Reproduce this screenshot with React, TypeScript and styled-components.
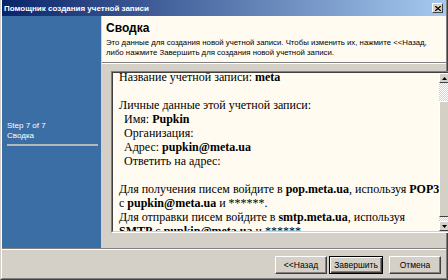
import React from "react";
import styled, { createGlobalStyle } from "styled-components";

const Global = createGlobalStyle`
  html, body { margin: 0; padding: 0; background: #d4d0c8; }
  body { width: 448px; height: 280px; overflow: hidden; }
`;

const ui = `"Liberation Sans", Arial, sans-serif`;
const serif = `"Liberation Serif", "Times New Roman", serif`;

const Window = styled.div`
  width: 448px;
  height: 280px;
  box-sizing: border-box;
  display: flex;
  flex-direction: column;
  background: #d4d0c8;
  border-left: 1px solid #d4d0c8;
  border-right: 1px solid #404040;
  border-bottom: 1px solid #404040;
`;

const Frame = styled.div`
  flex: 1;
  display: flex;
  flex-direction: column;
  border-left: 1px solid #ffffff;
  border-right: 1px solid #808080;
  border-bottom: 1px solid #808080;
  min-height: 0;
`;

const TitleBar = styled.div`
  height: 16px;
  flex: none;
  display: flex;
  align-items: center;
  justify-content: space-between;
  padding: 0 3px 0 2px;
  background: linear-gradient(to right, #0a246a, #a6caf0);
  font: bold 8px ${ui};
  color: #fff;
  white-space: nowrap;
`;

const CloseBtn = styled.div`
  width: 11px;
  height: 10px;
  box-sizing: border-box;
  background: #d4d0c8;
  border: 1px solid;
  border-color: #fff #404040 #404040 #fff;
  display: flex;
  align-items: center;
  justify-content: center;
`;

const Body = styled.div`
  height: 232px;
  flex: none;
  display: flex;
`;

const Sidebar = styled.div`
  width: 100px;
  flex: none;
  background: #3a6ea5;
  border-right: 1px solid #d4d0c8;
  display: flex;
  flex-direction: column;
  justify-content: flex-end;
  padding: 0 3px 102px 5px;
  box-sizing: border-box;
  color: #fff;
  font: 8px ${ui};
`;

const StepLine = styled.div`
  line-height: 10px;
`;

const StepRule = styled.div`
  height: 2px;
  margin-top: 3px;
  background: #b4b8bc;
`;

const Main = styled.div`
  flex: 1;
  display: flex;
  flex-direction: column;
  min-width: 0;
`;

const Header = styled.div`
  height: 47px;
  flex: none;
  box-sizing: border-box;
  background: #fffbf0;
  border-bottom: 1px solid #808080;
  padding: 5px 6px 0 4px;
`;

const HeaderTitle = styled.div`
  font: bold 12px ${ui};
  color: #000;
  line-height: 14px;
`;

const HeaderText = styled.div`
  margin-top: 3px;
  font: 7.8px ${ui};
  line-height: 9.5px;
  color: #000;
  white-space: nowrap;
`;

const Pane = styled.div`
  flex: 1;
  border-top: 1px solid #fff;
  padding: 7px 8px 15px 9px;
  display: flex;
  min-height: 0;
`;

const Sunken = styled.div`
  flex: 1;
  display: flex;
  border: 1px solid;
  border-color: #808080 #fff #fff #808080;
`;

const SunkenInner = styled.div`
  flex: 1;
  display: flex;
  border: 1px solid;
  border-color: #404040 #d4d0c8 #d4d0c8 #404040;
  background: #fffbf0;
  min-height: 0;
`;

const TextArea = styled.div`
  flex: 1;
  overflow: hidden;
  padding-left: 6px;
  font: 12px ${serif};
  color: #000;
`;

const TextInner = styled.div`
  margin-top: -3px;
`;

const Line = styled.div<{ $indent?: boolean }>`
  line-height: 14px;
  height: 14px;
  white-space: nowrap;
  padding-left: ${(p) => (p.$indent ? "5px" : "0")};
`;

const ScrollBar = styled.div`
  width: 10px;
  flex: none;
  display: flex;
  flex-direction: column;
`;

const ScrollBtn = styled.div`
  height: 10px;
  flex: none;
  box-sizing: border-box;
  background: #d4d0c8;
  border: 1px solid;
  border-color: #fff #404040 #404040 #fff;
  display: flex;
  align-items: center;
  justify-content: center;
`;

const Track = styled.div<{ $h: number }>`
  height: ${(p) => p.$h}px;
  flex: none;
  background: repeating-conic-gradient(#d4d0c8 0 25%, #ffffff 0 50%) 0 0 / 2px 2px;
`;

const Thumb = styled.div`
  flex: 1;
  box-sizing: border-box;
  background: #d4d0c8;
  border: 1px solid;
  border-color: #fff #404040 #404040 #fff;
`;

const Footer = styled.div`
  flex: 1;
  border-top: 1px solid #808080;
  box-shadow: inset 0 1px #fff;
  display: flex;
  align-items: center;
  justify-content: flex-end;
  padding: 2px 5px 0 0;
`;

const Button = styled.button<{ $default?: boolean; $gap?: number }>`
  width: ${(p) => (p.$default ? 54 : 52)}px;
  height: 18px;
  margin-left: ${(p) => p.$gap ?? 0}px;
  padding: 0;
  box-sizing: border-box;
  background: #d4d0c8;
  font: 8.5px ${ui};
  color: #000;
  border: 1px solid;
  border-color: ${(p) => (p.$default ? "#000" : "#fff #404040 #404040 #fff")};
  box-shadow: ${(p) =>
    p.$default
      ? "inset 1px 1px #fff, inset -1px -1px #404040, inset -2px -2px #808080"
      : "inset -1px -1px #808080"};
`;

const Arrow = ({ down }: { down?: boolean }) => (
  <svg width="5" height="3" viewBox="0 0 5 3">
    <path d={down ? "M0 0h5L2.5 3z" : "M0 3h5L2.5 0z"} fill="#000" />
  </svg>
);

const B = styled.b`
  font-weight: bold;
`;

export default function App() {
  return (
    <>
      <Global />
      <Window>
        <Frame>
          <TitleBar>
            <span>Помощник создания учетной записи</span>
            <CloseBtn>
              <svg width="6" height="5" viewBox="0 0 6 5">
                <path d="M0 0L6 5M6 0L0 5" stroke="#000" strokeWidth="1.3" />
              </svg>
            </CloseBtn>
          </TitleBar>
          <Body>
            <Sidebar>
              <StepLine>Step 7 of 7</StepLine>
              <StepLine>Сводка</StepLine>
              <StepRule />
            </Sidebar>
            <Main>
              <Header>
                <HeaderTitle>Сводка</HeaderTitle>
                <HeaderText>
                  Это данные для создания новой учетной записи. Чтобы изменить их, нажмите &lt;&lt;Назад,
                  <br />
                  либо нажмите Завершить для создания новой учетной записи.
                </HeaderText>
              </Header>
              <Pane>
                <Sunken>
                  <SunkenInner>
                    <TextArea>
                      <TextInner>
                        <Line>
                          Название учетной записи: <B>meta</B>
                        </Line>
                        <Line />
                        <Line>Личные данные этой учетной записи:</Line>
                        <Line $indent>
                          Имя: <B>Pupkin</B>
                        </Line>
                        <Line $indent>Организация:</Line>
                        <Line $indent>
                          Адрес: <B>pupkin@meta.ua</B>
                        </Line>
                        <Line $indent>Ответить на адрес:</Line>
                        <Line />
                        <Line>
                          Для получения писем войдите в <B>pop.meta.ua</B>, используя <B>POP3</B>
                        </Line>
                        <Line>
                          с <B>pupkin@meta.ua</B> и ******.
                        </Line>
                        <Line>
                          Для отправки писем войдите в <B>smtp.meta.ua</B>, используя
                        </Line>
                        <Line>
                          <B>SMTP</B> с <B>pupkin@meta.ua</B> и ******.
                        </Line>
                      </TextInner>
                    </TextArea>
                    <ScrollBar>
                      <ScrollBtn>
                        <Arrow />
                      </ScrollBtn>
                      <Track $h={18} />
                      <Thumb />
                      <Track $h={4} />
                      <ScrollBtn>
                        <Arrow down />
                      </ScrollBtn>
                    </ScrollBar>
                  </SunkenInner>
                </Sunken>
              </Pane>
            </Main>
          </Body>
          <Footer>
            <Button>&lt;&lt;Назад</Button>
            <Button $default $gap={2}>
              Завершить
            </Button>
            <Button $gap={6}>Отмена</Button>
          </Footer>
        </Frame>
      </Window>
    </>
  );
}
